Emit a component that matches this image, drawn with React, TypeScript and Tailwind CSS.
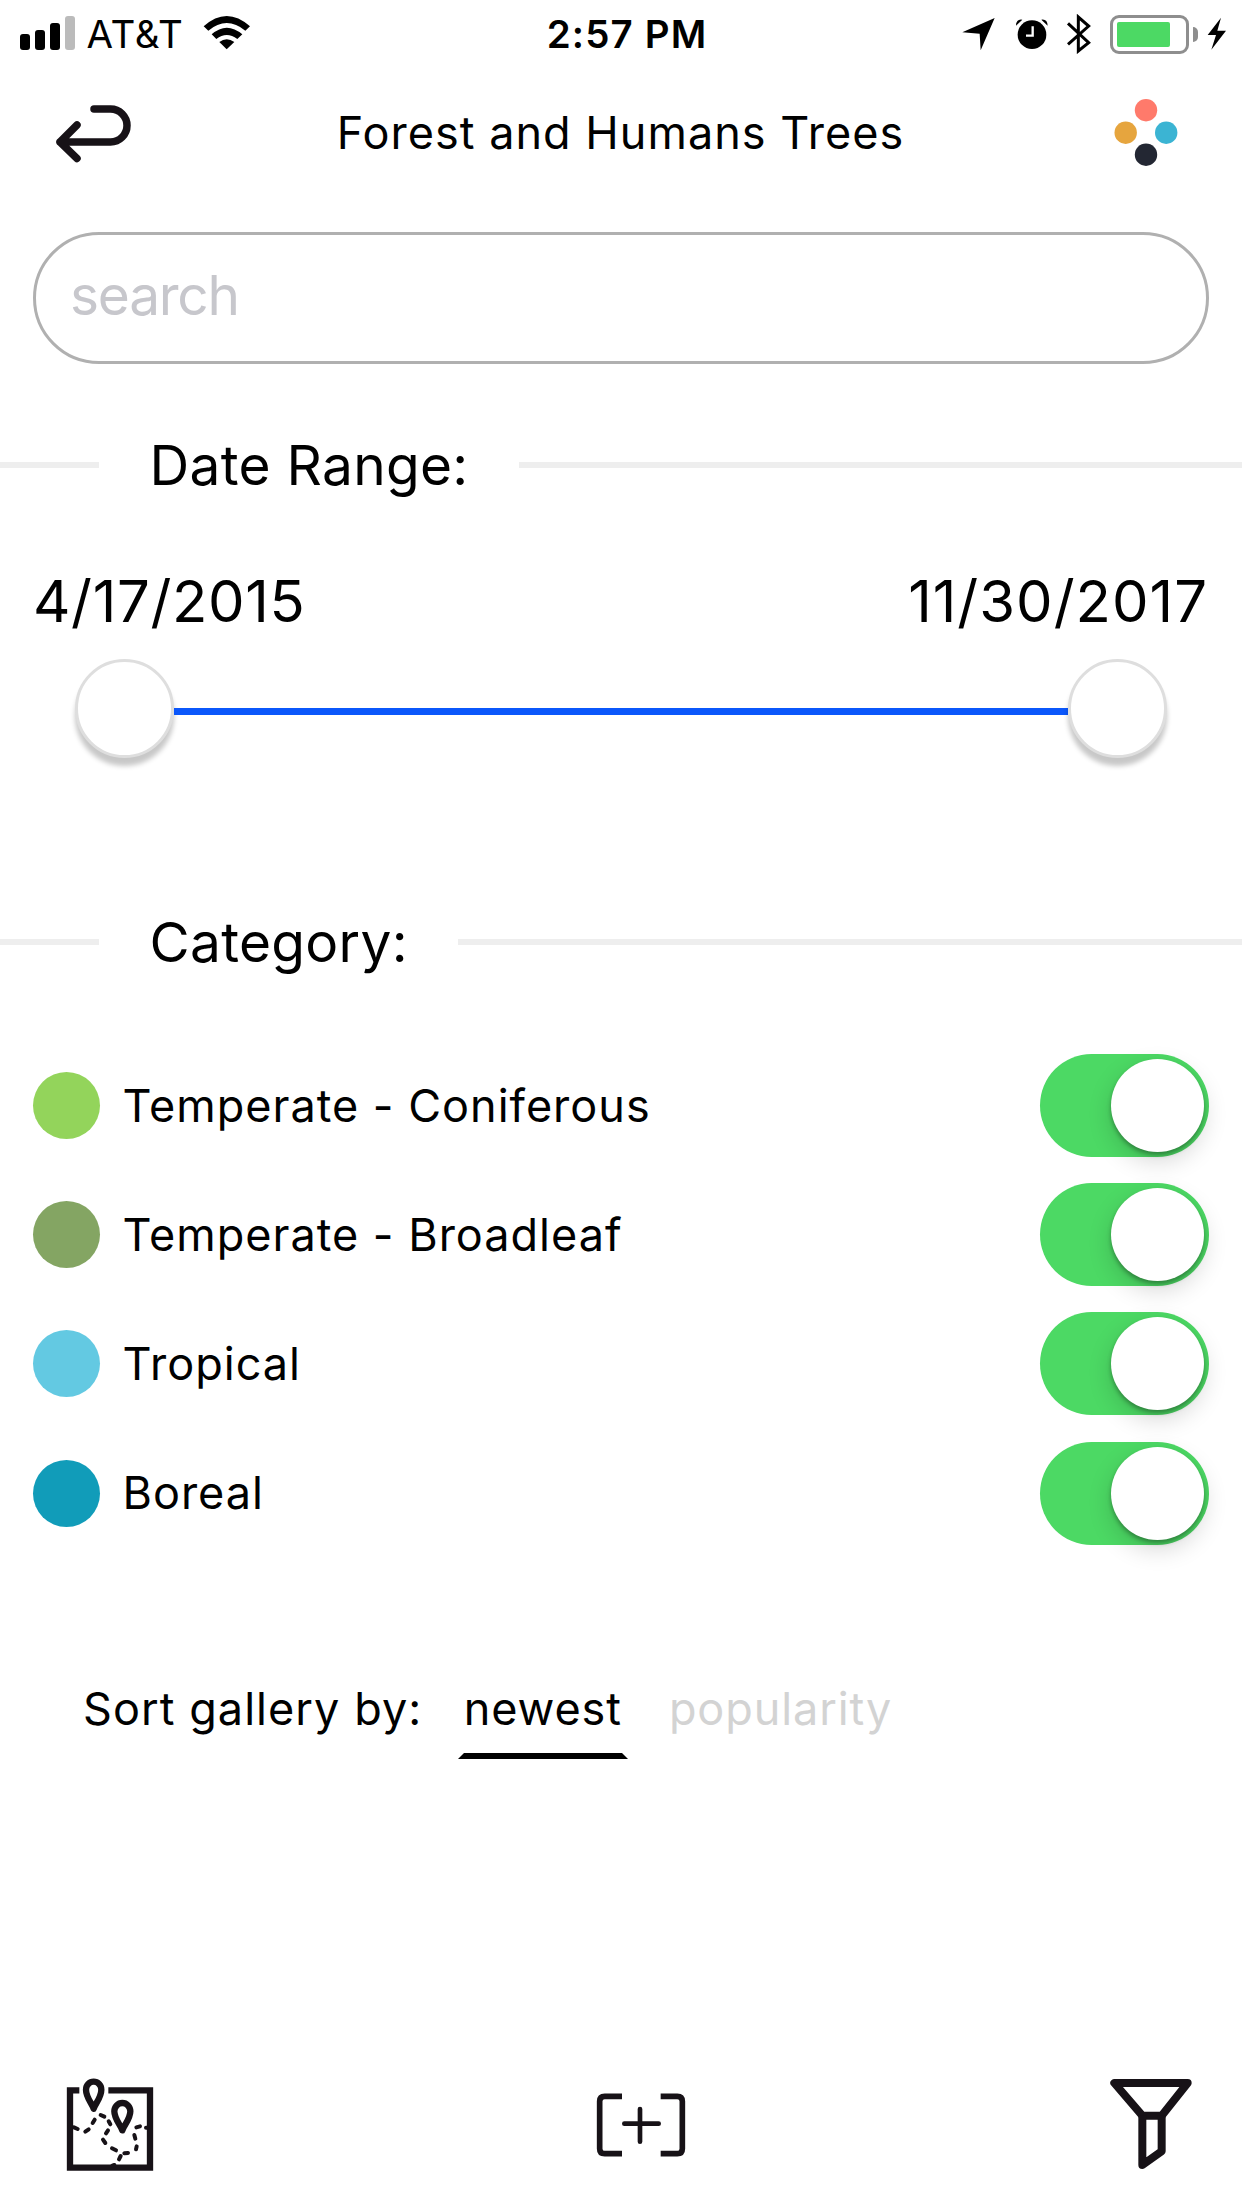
const categories = [
  { name: "Temperate - Coniferous", dot: "bg-[#93d45b]" },
  { name: "Temperate - Broadleaf", dot: "bg-[#84a563]" },
  { name: "Tropical", dot: "bg-[#63c9e2]" },
  { name: "Boreal", dot: "bg-[#119cb9]" },
];

function StatusBar() {
  return (
    <div className="grid h-[68px] grid-cols-[1fr_auto_1fr] items-center pl-5 pr-[15px] text-[38.5px] leading-[68px]">
      <div className="flex items-center">
        <div className="mt-[-2px] flex h-[34px] items-end gap-[5px]">
          <span className="h-[16px] w-[10px] rounded-[3px] bg-black" />
          <span className="h-[20px] w-[10px] rounded-[3px] bg-black" />
          <span className="h-[27px] w-[10px] rounded-[3px] bg-black" />
          <span className="h-[34px] w-[10px] rounded-[3px] bg-[#bbbbbb]" />
        </div>
        <span className="ml-[11.500px] tracking-[0.68px]">AT&amp;T</span>
        <svg className="-mt-[2px] ml-[19px]" width="48" height="36" viewBox="609 46 144 108">
          <path d="M611 80 Q680 18 750 80 L736 93 Q680 47 625 93 Z" />
          <path d="M635 104 Q680 64 727 104 L712 118 Q680 94 649 118 Z" />
          <path d="M658 127 Q680 111 703 127 L680 149 Z" />
        </svg>
      </div>
      <span className="ml-[7px] font-semibold tracking-[1.13px]">2:57 PM</span>
      <div className="flex items-center justify-end">
        <svg width="34" height="34" viewBox="123 51 102 102">
          <path d="M221 54 L179 151 L176 101 L124 97 Z" />
        </svg>
        <svg className="ml-[19px]" width="34" height="32" viewBox="282 51 102 96">
          <circle cx="333" cy="101" r="43" />
          <path d="M285 74 Q286 53 304 56 Z M380 74 Q379 53 361 56 Z" />
          <path d="M335 76 V104 H315" fill="none" stroke="white" strokeWidth="7" />
        </svg>
        <svg className="ml-[17px]" width="26" height="40" viewBox="436 39 78 120">
          <path
            d="M442 67 L504 125 L473 150 V48 L504 75 L442 130"
            fill="none"
            stroke="black"
            strokeWidth="9"
          />
        </svg>
        <div className="ml-[18px] flex h-[39px] w-[79px] rounded-[9px] border-[3px] border-[#8e8e8e] p-[4px]">
          <span className="h-full w-[53px] rounded-[2px] bg-[#4cd964]" />
        </div>
        <span className="ml-[4px] h-[15px] w-[5px] rounded-r-full bg-[#8e8e8e]" />
        <svg className="ml-[9px]" width="20" height="34" viewBox="860 50 60 102">
          <path d="M902 52 L862 104 L887 104 L873 148 L917 91 L891 91 Z" />
        </svg>
      </div>
    </div>
  );
}

function TitleBar() {
  return (
    <div className="grid h-[129px] grid-cols-[1fr_auto_1fr] items-center pl-[54px] pr-[64px]">
      <svg className="mt-[3px]" width="80" height="60" viewBox="54 104 80 60">
        <path
          d="M94 109 H110.500 A16.500 16.500 0 0 1 110.500 142 H60 M77 125 L60 142 L77 158.500"
          fill="none"
          stroke="#171217"
          strokeWidth="7.500"
          strokeLinecap="round"
          strokeLinejoin="round"
        />
      </svg>
      <h1 className="ml-[9px] text-[45px] leading-[60px] tracking-[1.03px]">
        Forest and Humans Trees
      </h1>
      <svg className="justify-self-end" width="64" height="68" viewBox="1114 98.800 64 68">
        <circle cx="1146" cy="110" r="11.200" fill="#ff7a6b" />
        <circle cx="1125.700" cy="132.500" r="11.200" fill="#e6a53e" />
        <circle cx="1166.200" cy="132.500" r="11.200" fill="#3bb4d3" />
        <circle cx="1146" cy="154.500" r="11.200" fill="#232733" />
      </svg>
    </div>
  );
}

function SectionHeading({ title }: { title: string }) {
  return (
    <div className="flex h-[66px] items-center text-[55px] leading-[66px] tracking-[0.3px]">
      <span className="h-[6px] w-[99px] bg-[#eeeeee]" />
      <h2 className="pl-[50.500px] pr-[50px]">{title}</h2>
      <span className="h-[6px] flex-1 bg-[#eeeeee]" />
    </div>
  );
}

function SliderKnob() {
  return (
    <span className="size-[99px] rounded-full border-[3px] border-[#dedede] bg-white shadow-[0_8px_5px_rgba(0,0,0,0.22)]" />
  );
}

function Toggle() {
  return (
    <span className="flex h-[103px] w-[169px] items-center justify-end rounded-full bg-[#4cd964] pr-[5px]">
      <span className="size-[93px] rounded-full bg-white shadow-[0_9px_24px_rgba(0,0,0,0.16),0_3px_4px_rgba(0,0,0,0.3)]" />
    </span>
  );
}

function TabBar() {
  return (
    <div className="mt-auto flex h-[167px] items-center justify-between pl-[66px] pr-[48px]">
      <svg width="88" height="96" viewBox="78 54 264 288" fill="none" stroke="#171217">
        <path d="M118 94 H90 V326 H330 V94 H205" strokeWidth="19" />
        <path
          d="M161 149 C155 132 138 115 138 92 A23 24 0 0 1 184 92 C184 115 167 132 161 149 Z"
          strokeWidth="19"
          strokeLinejoin="round"
        />
        <path
          d="M247 214 C241 197 223 180 223 157 A24 25 0 0 1 271 157 C271 180 253 197 247 214 Z"
          strokeWidth="19"
          strokeLinejoin="round"
        />
        <g strokeWidth="12" strokeLinecap="round">
          <path d="M102 205 L113 210 M136 218 L146 211 M158 192 L164 182 M182 168 L193 173 M206 187 L211 196 M204 214 L198 223 M189 242 L196 252 M216 268 L228 274 M253 283 L264 282 M242 291 L237 301 M217 320 L223 318 M288 271 L290 262 M286 239 L283 228 M289 205 L300 202 M318 206 L324 206" />
        </g>
      </svg>
      <svg
        className="ml-[19px]"
        width="90"
        height="66"
        viewBox="78 96 270 198"
        fill="none"
        stroke="#171217"
        strokeWidth="17"
      >
        <path d="M156 109 H104 Q89 109 89 124 V266 Q89 281 104 281 H156" />
        <path d="M272 109 H322 Q337 109 337 124 V266 Q337 281 322 281 H272" />
        <path d="M163 191 H266 M210 147 V245" strokeWidth="14" strokeLinecap="round" />
      </svg>
      <svg
        className="-mt-[2px]"
        width="86"
        height="94"
        viewBox="84 54 258 282"
        fill="none"
        stroke="#171217"
        strokeWidth="24"
        strokeLinejoin="round"
      >
        <path d="M103 72 H323 L245 170 H187 Z" />
        <path d="M187 170 V318 L245 277 V170" />
      </svg>
    </div>
  );
}

export default function App() {
  return (
    <div className="flex h-[2208px] w-[1242px] flex-col overflow-hidden bg-white font-['Inter',sans-serif] text-black">
      <StatusBar />
      <TitleBar />
      <main className="flex flex-col">
        <input
          className="mx-[33px] mt-[35px] h-[132px] rounded-full border-[3px] border-[#b0b0b0] pb-[7px] pl-[34px] pr-9 text-[55px] tracking-[-1.250px] outline-none placeholder:text-[#c7c7cc]"
          placeholder="search"
        />

        <section className="mt-[68px]">
          <SectionHeading title="Date Range:" />
          <div className="mt-[68px] flex justify-between pl-[33px] pr-[34px] text-[58px] leading-[70px]">
            <span className="tracking-[0.65px]">4/17/2015</span>
            <span className="tracking-[1.010px]">11/30/2017</span>
          </div>
          <div className="mt-[23px] flex items-center px-[75px]">
            <SliderKnob />
            <span className="mt-[6px] h-[7px] flex-1 bg-[#0b57fb]" />
            <SliderKnob />
          </div>
        </section>

        <section className="mt-[151px]">
          <SectionHeading title="Category:" />
          <ul className="mt-[79px] flex flex-col gap-[26.200px]">
            {categories.map((category) => (
              <li key={category.name} className="flex items-center px-[33px]">
                <span className={`size-[67px] rounded-full ${category.dot}`} />
                <span className="ml-[22.500px] flex-1 text-[45px] leading-[60px] tracking-[1px]">
                  {category.name}
                </span>
                <Toggle />
              </li>
            ))}
          </ul>
        </section>

        <div className="mt-[134px] flex pl-[83px] text-[45px] leading-[60px]">
          <span className="tracking-[1.060px]">Sort gallery by:</span>
          <span className="ml-[35.500px] border-x-[6px] border-b-[6px] border-x-transparent border-b-black pb-[14px] tracking-[0.9px]">
            newest
          </span>
          <span className="ml-[41px] tracking-[0.9px] text-[#d3d3d3]">popularity</span>
        </div>
      </main>
      <TabBar />
    </div>
  );
}
